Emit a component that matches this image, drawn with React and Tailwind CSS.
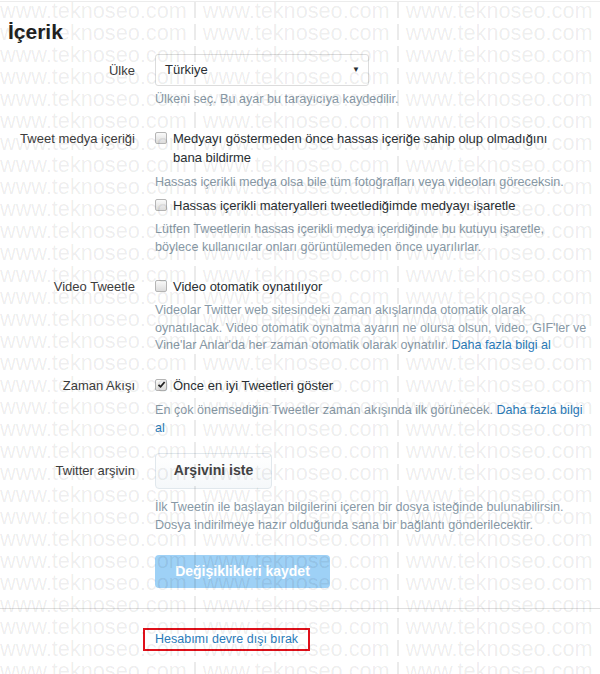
import React from "react"

const Label = ({ children, className = "" }) => (
  <div className={`text-right text-[13px] leading-[19px] text-[#3d3d3d] ${className}`}>{children}</div>
)

const Hint = ({ children, className = "" }) => (
  <p className={`whitespace-nowrap text-[12.6px] leading-[18px] text-[#8899a6] ${className}`}>{children}</p>
)

const Link = ({ children }) => <span className="text-[#2b7bb9]">{children}</span>

const Box = ({ checked }) => (
  <span className="mt-[3px] flex h-[12px] w-[12px] shrink-0 items-center justify-center rounded-[2px] border border-[#b5b5b5] bg-gradient-to-b from-[#fafafa] to-[#dcdcdc]">
    {checked && (
      <svg width="9" height="9" viewBox="0 0 9 9">
        <path d="M1.5 4.8 L3.6 6.8 L7.6 2" fill="none" stroke="#222" strokeWidth="1.8" />
      </svg>
    )}
  </span>
)

const Check = ({ checked, children }) => (
  <div className="flex gap-[6px] whitespace-nowrap text-[13px] leading-[19px] text-[#292f33]">
    <Box checked={checked} />
    <span>{children}</span>
  </div>
)

const Row = ({ label, children, className = "", align = "items-start" }) => (
  <div className={`grid grid-cols-[135px_440px] gap-x-[20px] ${align} ${className}`}>
    <Label>{label}</Label>
    <div>{children}</div>
  </div>
)

// one line of the site watermark: three copies split by thin bars
const MarkLine = () => (
  <div>
    {[0, 1, 2].map((j) => (
      <span key={j}>
        {j > 0 && <span className="mx-[7px] inline-block h-[16px] w-[2px] bg-current" />}
        www.teknoseo.com
      </span>
    ))}
  </div>
)

export default function App() {
  return (
    <div className="relative h-[674px] w-[600px] overflow-hidden bg-white font-['Liberation_Sans',Arial,sans-serif]">
      <div className="mt-[1px] h-px bg-[#ececec]" />

      <h1 className="ml-[8px] mt-[17px] text-[21px] font-bold leading-[26px] text-[#222]">İçerik</h1>

      <Row label="Ülke" align="items-center" className="mt-[9px]">
        <div className="flex h-[32px] w-[214px] items-center justify-between rounded-[3px] border border-[#dcdcdc] pl-[9px] pr-[8px] text-[13px] text-[#292f33]">
          <span>Türkiye</span>
          <span className="text-[8px]">▼</span>
        </div>
      </Row>
      <Row label="" className="mt-[4px]">
        <Hint>Ülkeni seç. Bu ayar bu tarayıcıya kaydedilir.</Hint>
      </Row>

      <Row label="Tweet medya içeriği" className="mt-[21px]">
        <Check>
          Medyayı göstermeden önce hassas içeriğe sahip olup olmadığını
          <br />
          bana bildirme
        </Check>
        <Hint className="mt-[6px]">Hassas içerikli medya olsa bile tüm fotoğrafları veya videoları göreceksin.</Hint>
        <div className="mt-[5px]">
          <Check>Hassas içerikli materyalleri tweetlediğimde medyayı işaretle</Check>
        </div>
        <Hint className="mt-[5px]">
          Lütfen Tweetlerin hassas içerikli medya içerdiğinde bu kutuyu işaretle,
          <br />
          böylece kullanıcılar onları görüntülemeden önce uyarılırlar.
        </Hint>
      </Row>

      <Row label="Video Tweetle" className="mt-[21px]">
        <Check>Video otomatik oynatılıyor</Check>
        <Hint className="mt-[6px] !leading-[17.5px]">
          Videolar Twitter web sitesindeki zaman akışlarında otomatik olarak
          <br />
          oynatılacak. Video otomatik oynatma ayarın ne olursa olsun, video, GIF'ler ve
          <br />
          Vine'lar Anlar'da her zaman otomatik olarak oynatılır. <Link>Daha fazla bilgi al</Link>
        </Hint>
      </Row>

      <Row label="Zaman Akışı" className="mt-[21px]">
        <Check checked>Önce en iyi Tweetleri göster</Check>
        <Hint className="mt-[6px] !leading-[18.5px]">
          En çok önemsediğin Tweetler zaman akışında ilk görünecek. <Link>Daha fazla bilgi</Link>
          <br />
          <Link>al</Link>
        </Hint>
      </Row>

      <Row label="Twitter arşivin" align="items-center" className="mt-[15px]">
        <button className="h-[36px] w-[117px] rounded-[4px] border border-[#e1e8ed] bg-gradient-to-b from-[#fff] to-[#f5f8fa] text-[14px] font-bold text-[#444]">
          Arşivini iste
        </button>
      </Row>
      <Row label="" className="mt-[9px]">
        <Hint>
          İlk Tweetin ile başlayan bilgilerini içeren bir dosya isteğinde bulunabilirsin.
          <br />
          Dosya indirilmeye hazır olduğunda sana bir bağlantı gönderilecektir.
        </Hint>
      </Row>

      <Row label="" className="mt-[21px]">
        <button className="h-[33px] w-[175px] rounded-[4px] bg-[#9ed1f6] text-[14px] font-bold text-white">
          Değişiklikleri kaydet
        </button>
      </Row>

      <div className="mt-[20px] h-px bg-[#dedede]" />

      <div className="ml-[143px] mt-[19px] inline-block border-2 border-[#e0101a] px-[10px] text-[12.5px] leading-[19px] text-[#2b7bb9]">
        Hesabımı devre dışı bırak
      </div>

      {/* watermark laid over the whole page */}
      <div className="pointer-events-none absolute inset-0 select-none whitespace-nowrap text-[21.7px] leading-[22px] text-black/[0.08]">
        {Array.from({ length: 31 }).map((_, i) => (
          <MarkLine key={i} />
        ))}
      </div>
    </div>
  )
}
